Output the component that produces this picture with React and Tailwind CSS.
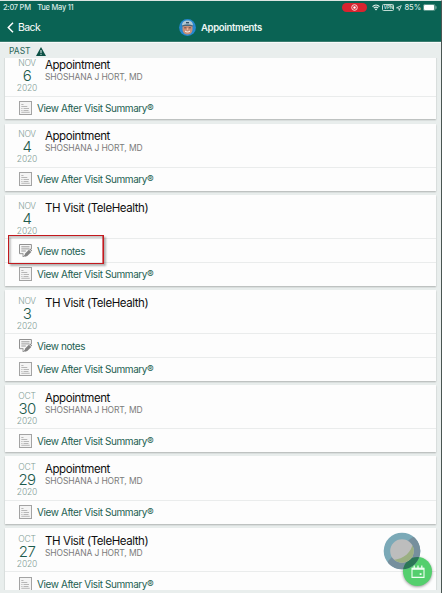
const DOCTOR = 'SHOSHANA J HORT, MD';

const VISITS = [
  { id: 1, month: 'NOV', day: 6, title: 'Appointment', provider: DOCTOR },
  { id: 2, month: 'NOV', day: 4, title: 'Appointment', provider: DOCTOR },
  { id: 3, month: 'NOV', day: 4, title: 'TH Visit (TeleHealth)', notes: true, highlighted: true },
  { id: 4, month: 'NOV', day: 3, title: 'TH Visit (TeleHealth)', notes: true },
  { id: 5, month: 'OCT', day: 30, title: 'Appointment', provider: DOCTOR },
  { id: 6, month: 'OCT', day: 29, title: 'Appointment', provider: DOCTOR },
  { id: 7, month: 'OCT', day: 27, title: 'TH Visit (TeleHealth)', provider: DOCTOR },
];

const SummaryIcon = () => (
  <svg width="13" height="14" viewBox="0 0 13 14" fill="none" stroke="#a3a3a3">
    <rect x="0.5" y="0.5" width="12" height="13" fill="#f4f4f4" />
    <path d="M2.3 3.5h2.2M2.3 5.5h6M2.3 7.5h1.2M4.5 7.5h5.5M2.3 9.5h1.2M4.5 9.5h5M2.3 11.3h8.4" strokeWidth="0.75" />
  </svg>
);

const NotesIcon = () => (
  <svg width="13" height="14" viewBox="0 0 13 14" fill="none" stroke="#919191">
    <path d="M12.4 5V.5H.5v9.2h3.8" fill="#f6f6f6" strokeWidth="1" />
    <path d="M4 9.7v3.2l2-1.8" strokeWidth="0.9" />
    <path d="M2.3 2.8h8.2M2.3 4.9h8.2M2.3 7h4.5" strokeWidth="0.9" />
    <path d="M5.3 13l.6-3.2 4-4.1 2.4 2.2-4 4.1z" fill="#838383" stroke="none" />
    <path d="M10.3 5.2l.9-.8 2 2-.8.9z" fill="#838383" stroke="none" />
  </svg>
);

const LinkRow = ({ icon, label, highlighted }) => (
  <div className={`relative flex h-[23.7px] items-center border-t border-[#eaecec] pl-[14px] ${highlighted ? 'z-10' : ''}`}>
    {highlighted && (
      <div className="absolute -top-[4px] left-[3px] h-[29px] w-[96px] border-[1.5px] border-[#c3191e] shadow-[2px_2px_2px_rgba(0,0,0,0.3),inset_2px_2px_2px_rgba(0,0,0,0.22)]">
        <div className="h-full w-full border-r border-[#c3191e]/60" />
      </div>
    )}
    {icon}
    <span className="ml-[5px] text-[10px] leading-none tracking-[-0.41px] text-[#245f52]">{label}</span>
  </div>
);

const VisitCard = ({ visit }) => (
  <div className="mb-[4.3px] bg-[#fdfdfd] shadow-[0_1px_1.5px_rgba(0,0,0,0.25)]">
    <div className="flex h-[43.4px]">
      <div className="ml-[7px] flex w-[30px] flex-col items-center pt-[6.7px] text-[8.5px] font-light text-[#84a097]">
        <span className="leading-[9px] tracking-[-0.2px]">{visit.month}</span>
        <span className="text-[15px] leading-[16px] tracking-[-0.6px] text-[#1e5b4d]">{visit.day}</span>
        <span className="leading-[9px] tracking-[-0.15px]">2020</span>
      </div>
      <div className="ml-[3px] pt-[5.7px]">
        <h3 className="text-[11.5px] leading-[14px] tracking-[-0.43px] text-[#101010]">{visit.title}</h3>
        <p className="text-[8.5px] leading-[10px] tracking-[-0.13px] text-[#7b7b7b]">{visit.provider}</p>
      </div>
    </div>
    {visit.notes && <LinkRow icon={<NotesIcon />} label="View notes" highlighted={visit.highlighted} />}
    <LinkRow icon={<SummaryIcon />} label="View After Visit Summary®" />
  </div>
);

const Avatar = () => (
  <svg width="17" height="17" viewBox="0 0 17 17">
    <circle cx="8.5" cy="8.5" r="8.4" fill="#2688d0" />
    <path d="M3.5 7h10v4c-.5 3-2.5 4.5-5 4.5S4 14 3.5 11z" fill="#c98f78" />
    <path d="M3 7c0-4 2-5.5 5.5-5.5S14 3 14 7L8.5 5.8z" fill="#afc7d3" />
    <path d="M2.5 6.8c3-1.8 9-1.8 12 0l-1 .8c-3-1.3-7-1.3-10 0z" fill="#476477" />
    <path d="M7 3h3v1.4H7z" fill="#344f67" />
    <path d="M5.2 8.8h2.2M9.7 8.8h2.2" stroke="#6b4a44" />
    <path d="M8.5 9v2" stroke="#eab195" strokeWidth="1.2" />
    <path d="M6 12c1.5 1.3 3.5 1.3 5 0" stroke="#fff" fill="none" />
  </svg>
);

const StatusBar = () => (
  <div className="flex h-[13px] items-center pt-[0.5px] pl-[3px] pr-[4px] text-[7.5px] leading-none font-medium text-[#d9eae5]">
    <span className="tracking-[-0.26px]">2:07 PM</span>
    <span className="ml-[6.5px] tracking-[-0.26px]">Tue May 11</span>
    <div className="ml-auto flex h-[9px] w-[25px] items-center justify-center rounded-full bg-[#d9232f]">
      <svg width="7" height="7" viewBox="0 0 7 7" fill="none" stroke="#fff">
        <circle cx="3.5" cy="3.5" r="2.8" strokeWidth="0.8" />
        <circle cx="3.5" cy="3.5" r="1.2" fill="#fff" stroke="none" />
      </svg>
    </div>
    <svg className="ml-[5px]" width="8" height="7" viewBox="0 0 8 7" fill="none" stroke="#e1f0ec">
      <path d="M.5 2.6c2-2 5-2 7 0M1.8 4.1c1.3-1.2 3.1-1.2 4.4 0" strokeWidth="1.2" />
      <path d="M2.8 5.2L4 6.5l1.2-1.3C4.6 4.6 3.4 4.6 2.8 5.2z" fill="#e1f0ec" stroke="none" />
    </svg>
    <span className="ml-[2px] flex h-[7px] w-[12px] items-center justify-center rounded-[1.5px] border border-[#c1dbd4] text-[4.5px] leading-none font-semibold">VPN</span>
    <svg className="ml-[2px]" width="6" height="6" viewBox="0 0 6 6" fill="none" stroke="#e1f0ec" strokeWidth="0.8">
      <path d="M5.3.6L.5 2.8l2.4.3.3 2.4z" />
    </svg>
    <span className="ml-[2px] tracking-[-0.1px]">85%</span>
    <svg className="ml-[2px]" width="14" height="7" viewBox="0 0 14 7">
      <rect x="0.4" y="0.4" width="11.7" height="6.2" rx="1.6" fill="none" stroke="#8ab5aa" strokeWidth="0.7" />
      <rect x="1" y="1" width="10.2" height="5" rx="0.8" fill="#fff" />
      <path d="M13 2.3v2.4" stroke="#8ab5aa" />
    </svg>
  </div>
);

const AddVisitButtons = () => (
  <>
    <div className="absolute top-[556px] left-[403px] flex h-[29px] w-[29px] items-center justify-center rounded-full bg-[#54cf6d] shadow-[0_1px_3px_rgba(0,0,0,0.4)]">
      <svg width="14" height="14" viewBox="0 0 14 14" fill="none" stroke="#effff2">
        <path d="M1 3.2h12V12.4H1z" strokeWidth="1.1" />
        <path d="M1 2.8h12v2H1z" fill="#effff2" stroke="none" />
        <path d="M3.2.4v3M7 .4v3M10.8.4v3" strokeWidth="1.3" />
        <path d="M8.7 8.2h1.8V10H8.7z" fill="#effff2" stroke="none" />
      </svg>
    </div>
    {/* floating touch indicator */}
    <svg className="absolute top-[531px] left-[383px]" width="38" height="38" viewBox="0 0 38 38">
      <defs>
        <clipPath id="ring"><circle cx="19" cy="19" r="18.3" /></clipPath>
        <clipPath id="center"><circle cx="19" cy="19" r="11.8" /></clipPath>
      </defs>
      <g clipPath="url(#ring)">
        <rect width="38" height="38" fill="#7ba9b7" />
        <path d="M27 7L33 3l5 3v32H0l6-10z" fill="#768f9d" />
        <circle cx="34.5" cy="39.5" r="14.5" fill="#2b7656" />
      </g>
      <g clipPath="url(#center)">
        <rect width="38" height="38" fill="#bdbdbd" />
        <path d="M30 10c-1 10-9 17-20 18l8 8 18-12z" fill="#9baf82" />
      </g>
    </svg>
  </>
);

export default function App() {
  return (
    <div className="relative h-[593px] w-[442px] overflow-hidden border-t border-r border-t-[#dce5e2] border-r-[#4a5552] bg-[#e9eeed] font-['Inter',sans-serif]">
      <header className="h-[41px] border-b border-[#397c6f] bg-[#0a6354]">
        <StatusBar />
        <div className="grid h-[27px] grid-cols-3 items-center text-white">
          <div className="flex items-center pl-[7px] text-[10.5px]">
            <svg width="7" height="11" viewBox="0 0 7 11" fill="none" stroke="white" strokeWidth="1.5">
              <path d="M6 .8L1.3 5.5 6 10.2" />
            </svg>
            <span className="ml-[4px] pt-px leading-none tracking-[-0.6px]">Back</span>
          </div>
          <div className="flex items-center pl-[32px]">
            <Avatar />
            <h1 className="ml-[5px] text-[9.5px] leading-none font-semibold tracking-[-0.32px] text-[#eef7f4]">Appointments</h1>
          </div>
        </div>
      </header>

      <div className="flex h-[16px] items-center border-t border-[#f8fafa] pl-[9px] pt-[2px] text-[8.5px] text-[#2b6659]">
        <span>PAST</span>
        <svg className="ml-[5px]" width="10" height="9" viewBox="0 0 10 9">
          <path d="M5 0l5 9H0z" fill="#0c5044" />
          <path d="M5 3v3M5 6.8v1.1" stroke="#e9eeed" />
        </svg>
      </div>

      <main className="h-[532px] overflow-hidden px-[5px]">
        <div className="-mt-[5.8px]">
          {VISITS.map(visit => (
            <VisitCard key={visit.id} visit={visit} />
          ))}
        </div>
      </main>
      <AddVisitButtons />
    </div>
  );
}
